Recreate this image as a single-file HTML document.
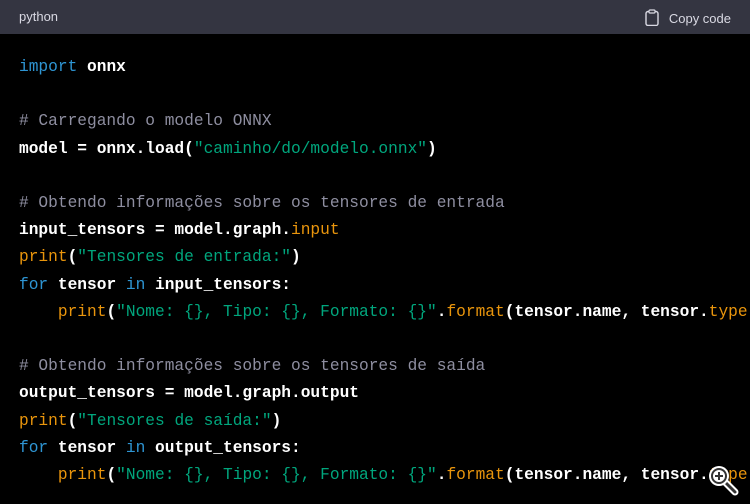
<html><head><style>
body{margin:0;background:#000;width:750px;height:504px;overflow:hidden}
.h{height:34px;background:#343541;color:#d9d9e3;font:13px "Liberation Sans",sans-serif;position:relative}
.h .l{position:absolute;left:19px;top:9px}
.h .r{position:absolute;right:19px;top:9px}
pre{margin:0;padding:20px 0 0 19px;font:bold 16.2px/27.2px "Liberation Mono",monospace;color:#fff;white-space:pre}
.k{color:#2e95d3;font-weight:normal}.s{color:#00a67d;font-weight:normal}.c{color:#8e8ea0;font-weight:normal}.o{color:#e9950c;font-weight:normal}
</style></head><body>
<div class="h"><span class="l">python</span><span class="r"><svg width="14" height="17" viewBox="0 0 14 17" style="vertical-align:-3px;margin-right:10px"><rect x="1" y="2.5" width="12" height="14" rx="2" fill="none" stroke="#d9d9e3" stroke-width="1.4"/><rect x="4" y="1" width="6" height="3" rx="1" fill="#343541" stroke="#d9d9e3" stroke-width="1.2"/></svg>Copy code</span></div>
<pre><span class="k">import</span> onnx

<span class="c"># Carregando o modelo ONNX</span>
model = onnx.load(<span class="s">"caminho/do/modelo.onnx"</span>)

<span class="c"># Obtendo informações sobre os tensores de entrada</span>
input_tensors = model.graph.<span class="o">input</span>
<span class="o">print</span>(<span class="s">"Tensores de entrada:"</span>)
<span class="k">for</span> tensor <span class="k">in</span> input_tensors:
    <span class="o">print</span>(<span class="s">"Nome: {}, Tipo: {}, Formato: {}"</span>.<span class="o">format</span>(tensor.name, tensor.<span class="o">type</span>.

<span class="c"># Obtendo informações sobre os tensores de saída</span>
output_tensors = model.graph.output
<span class="o">print</span>(<span class="s">"Tensores de saída:"</span>)
<span class="k">for</span> tensor <span class="k">in</span> output_tensors:
    <span class="o">print</span>(<span class="s">"Nome: {}, Tipo: {}, Formato: {}"</span>.<span class="o">format</span>(tensor.name, tensor.<span class="o">type</span>.</pre>
<svg style="position:absolute;left:705px;top:462px" width="36" height="36" viewBox="0 0 36 36"><line x1="19" y1="19" x2="30" y2="30" stroke="#fff" stroke-width="7" stroke-linecap="round"/><line x1="19" y1="19" x2="30" y2="30" stroke="#333" stroke-width="3" stroke-linecap="round"/><circle cx="14" cy="14" r="10" fill="#fff"/><circle cx="14" cy="14" r="7" fill="#fff" stroke="#333" stroke-width="2"/><path d="M14 10v8M10 14h8" stroke="#333" stroke-width="2"/></svg>
</body></html>
